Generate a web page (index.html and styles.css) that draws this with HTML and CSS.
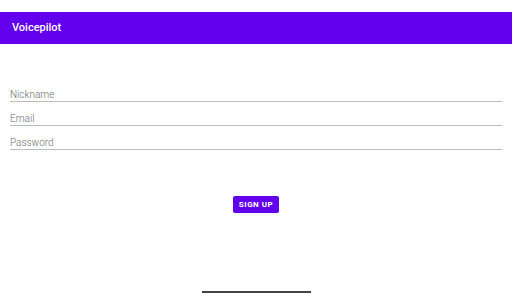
FILE: index.html
```html
<!DOCTYPE html>
<html lang="en">
<head>
    <meta charset="UTF-8">
    <meta name="viewport" content="width=device-width, initial-scale=1.0">
    <title>Voicepilot</title>
    <link rel="stylesheet" href="styles.css">
</head>
<body>
    <div class="screen">
        <div class="status"></div>
        <header class="appbar">Voicepilot</header>
        <form class="signup">
            <div class="field">Nickname</div>
            <div class="field">Email</div>
            <div class="field">Password</div>
            <div class="actions">
                <button type="button" class="btn">SIGN UP</button>
            </div>
        </form>
        <div class="navbar"><span class="handle"></span></div>
    </div>
</body>
</html>
```

FILE: styles.css
```css
body {
  margin: 0;
  font-family: Roboto, "Noto Sans", sans-serif;
  background: #fff;
}
.screen {
  display: flex;
  flex-direction: column;
  width: 512px;
  height: 300px;
}
.status {
  height: 12px;
}
.appbar {
  height: 32px;
  background-color: #6200ee;
  color: #fff;
  font-size: 11px;
  font-weight: 500;
  line-height: 32px;
  padding-left: 12px;
}
.signup {
  display: flex;
  flex-direction: column;
  margin: 34px 10px 0 10px;
}
.field {
  height: 13px;
  padding-top: 10px;
  line-height: 13px;
  font-size: 10px;
  font-weight: 300;
  color: #6f6f6f;
  border-bottom: 1px solid #bdbdbd;
}
.actions {
  display: flex;
  justify-content: center;
  margin-top: 46px;
}
.btn {
  width: 46px;
  height: 17px;
  padding: 0;
  border: none;
  border-radius: 2px;
  background-color: #6200ee;
  color: #fff;
  font-family: Roboto, sans-serif;
  font-size: 8px;
  font-weight: 700;
  letter-spacing: 0.5px;
}
.navbar {
  margin-top: auto;
  margin-bottom: 7px;
  display: flex;
  justify-content: center;
}
.handle {
  width: 109px;
  height: 2px;
  background-color: #444;
}
```
